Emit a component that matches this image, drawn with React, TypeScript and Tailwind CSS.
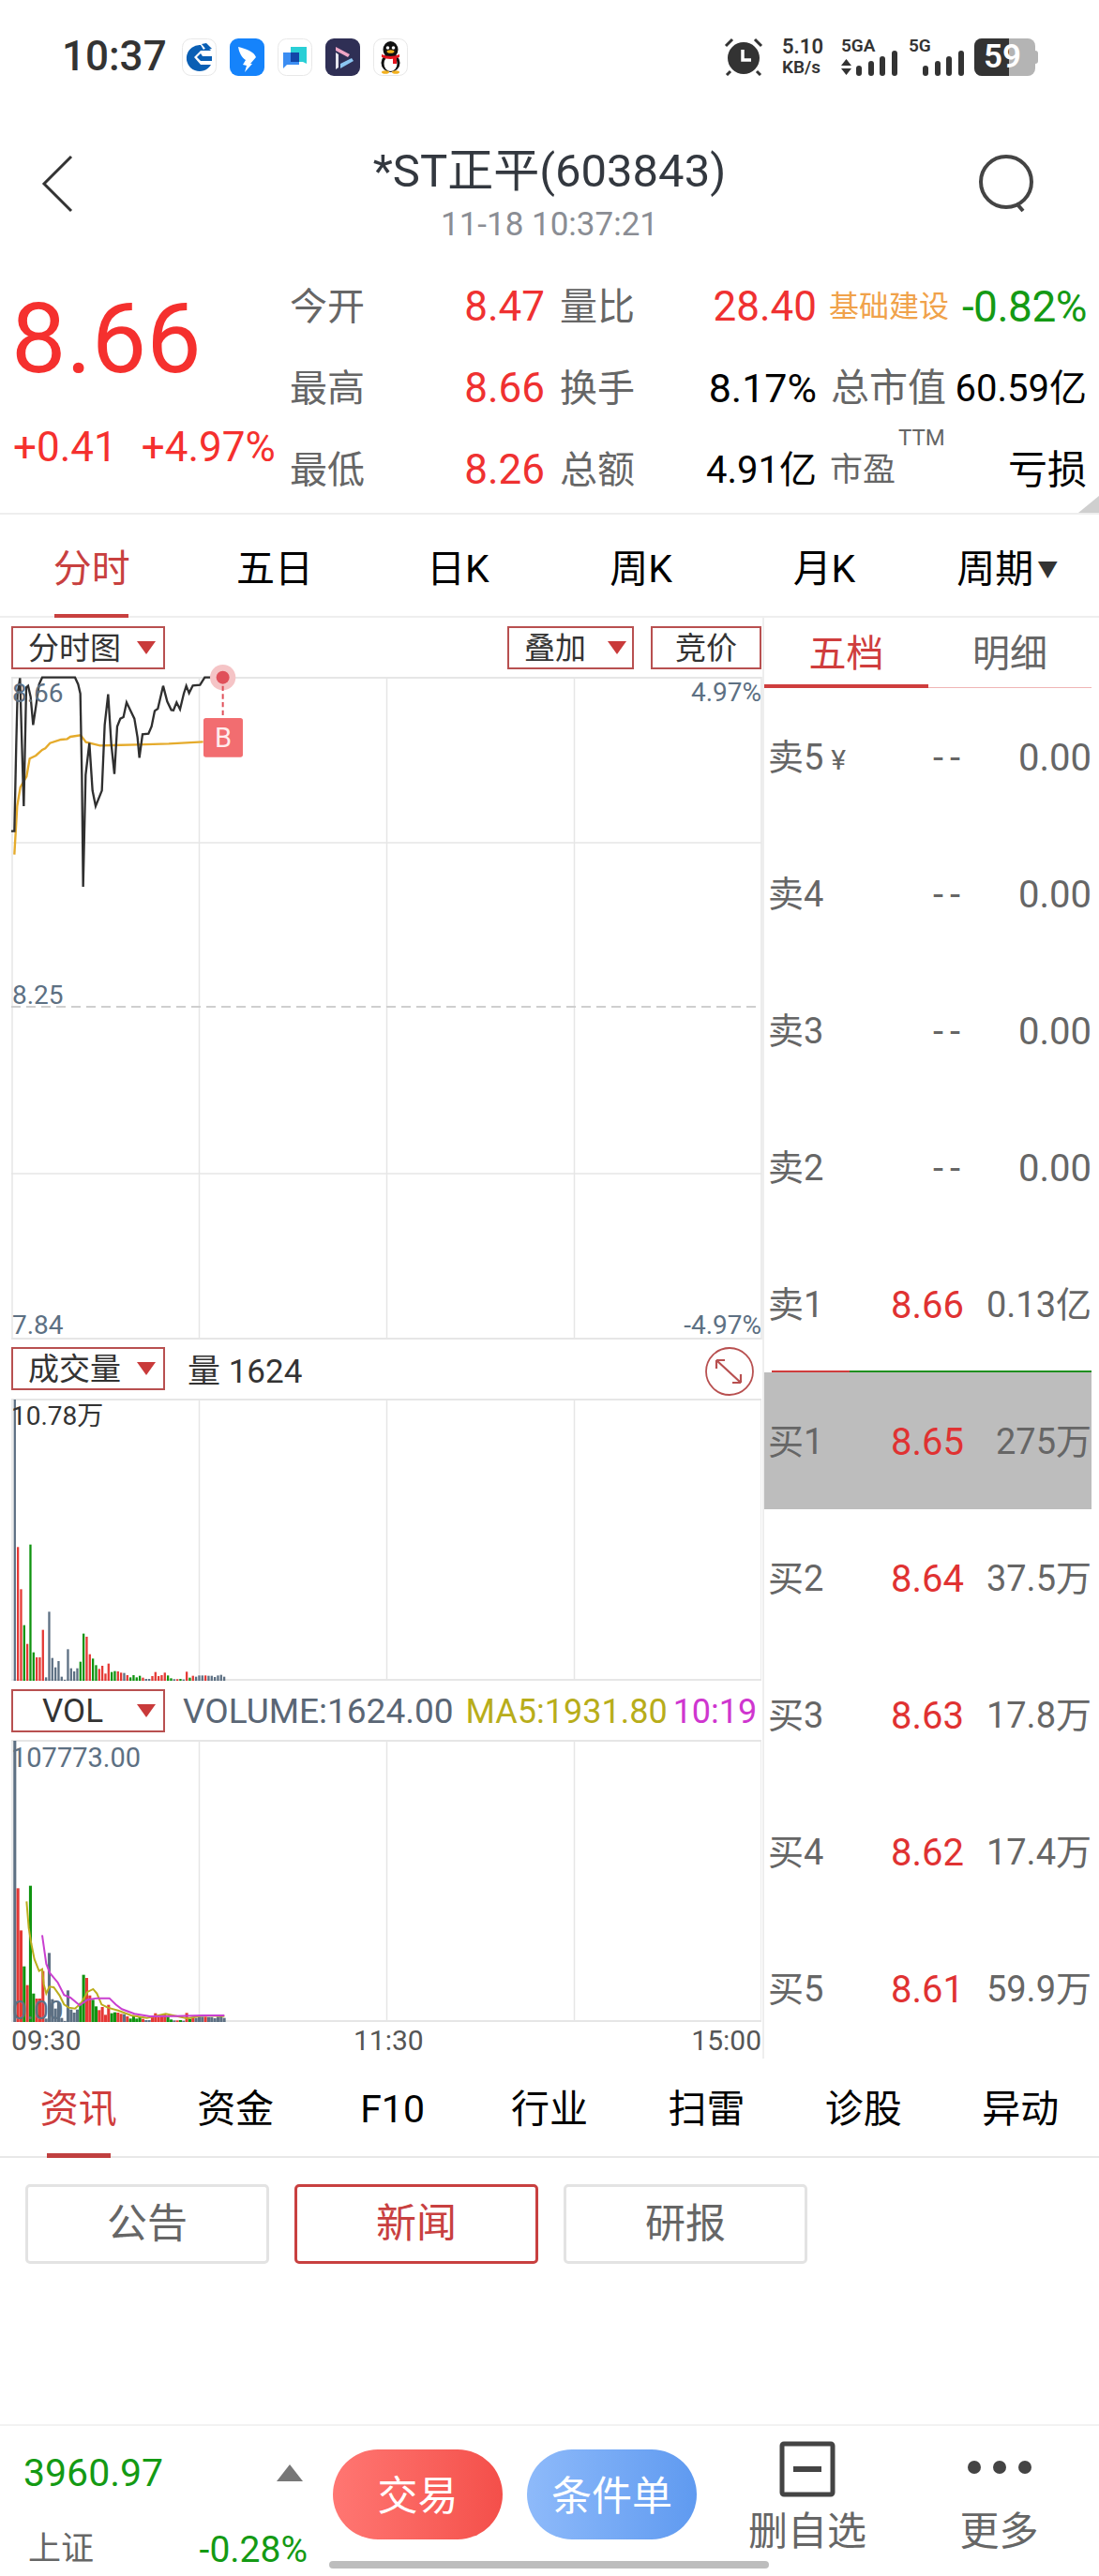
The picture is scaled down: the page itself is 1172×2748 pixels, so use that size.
import React from 'react';

const FONT = 'font-[Roboto,"Noto_Sans_CJK_SC",sans-serif]';

const price = '36,680 46,680 52,400 56,240 64,190 70,400 76,600 84,220 90,215 98,250 106,340 115,280 125,210 135,188 240,188 250,210 257,240 262,500 266,858 274,500 286,398 296,550 306,600 326,550 335,340 346,242 356,400 366,497 375,345 385,320 395,315 405,268 430,320 440,380 446,445 456,370 475,368 485,345 495,295 505,288 522,215 535,265 548,292 555,293 565,268 576,290 588,240 596,215 605,238 617,214 640,212 655,188 690,188 713,188';
const avg = '46,755 55,600 65,540 85,505 95,448 115,438 135,420 145,415 160,398 195,387 215,385 225,378 258,373 275,395 320,406 360,405 440,403 540,400 650,394';
const ma5 = '85,745 92,830 100,880 110,930 125,968 135,962 140,1010 148,1040 158,1018 172,1020 190,1045 205,1075 220,1085 240,1088 260,1070 280,1035 298,1026 310,1040 325,1075 345,1085 380,1095 420,1110 470,1118 530,1105 600,1120 650,1110 718,1112';
const ma10 = '135,853 148,945 160,975 185,1005 205,1045 225,1053 240,1065 255,1078 280,1060 310,1055 350,1055 370,1075 390,1090 430,1105 480,1113 560,1112 650,1110 718,1110';

const R = '#e53935';
const G = '#109410';
const B = '#5d7083';

// color + top of bar, read off the volume panel at 3x
const bars: [string, number][] = [
    [B, 278], [R, 750], [R, 885], [G, 1000], [R, 1060], [G, 742], [G, 1087], [R, 1103], [R, 1103], [R, 1015],
    [B, 1167], [B, 957], [B, 1105], [B, 1135], [B, 1115], [B, 1165], [B, 1175], [B, 1077], [B, 1138], [B, 1148],
    [B, 1138], [G, 1117], [G, 1027], [R, 1037], [R, 1093], [G, 1107], [G, 1128], [R, 1140], [R, 1130], [R, 1155],
    [R, 1123], [G, 1150], [G, 1147], [R, 1148], [R, 1152], [B, 1153], [R, 1160], [G, 1167], [G, 1160], [G, 1167],
    [G, 1162], [R, 1168], [B, 1172], [B, 1172], [R, 1163], [R, 1150], [R, 1163], [R, 1160], [R, 1152], [G, 1161],
    [G, 1170], [B, 1173], [R, 1173], [G, 1172], [B, 1174], [R, 1149], [G, 1168], [R, 1162], [B, 1165], [B, 1161],
    [B, 1161], [R, 1161], [B, 1162], [B, 1162], [B, 1166], [B, 1161], [B, 1159], [B, 1165],
];

const stats = [
    { label: '今开', value: '8.47', label2: '量比', value2: '28.40', color2: 'text-[44px] text-[#ef3131]' },
    { label: '最高', value: '8.66', label2: '换手', value2: '8.17%', color2: 'text-[43px] text-black' },
    { label: '最低', value: '8.26', label2: '总额', value2: '4.91亿', color2: 'text-[40px] text-black' },
];

const book = [
    { name: '卖5', price: '--', qty: '0.00', yen: true },
    { name: '卖4', price: '--', qty: '0.00' },
    { name: '卖3', price: '--', qty: '0.00' },
    { name: '卖2', price: '--', qty: '0.00' },
    { name: '卖1', price: '8.66', qty: '0.13亿' },
    { name: '买1', price: '8.65', qty: '275万', active: true },
    { name: '买2', price: '8.64', qty: '37.5万' },
    { name: '买3', price: '8.63', qty: '17.8万' },
    { name: '买4', price: '8.62', qty: '17.4万' },
    { name: '买5', price: '8.61', qty: '59.9万' },
];

const AppIcons = () => (
    <div className="ml-[19px] flex gap-[14px]">
        <svg width="37" height="40" viewBox="0 0 37 40">
            <rect x="0.5" y="0.5" width="36" height="39" rx="9" fill="#fff" stroke="#e8e8e8" />
            <path d="M20 7 A14 14 0 1 0 31 28 L20 28 L13 20 L20 13 L31 13 L27 9 L23 12 L20 7 Z" fill="#0a5fb4" />
            <path d="M20 16 L16 20 L20 24 L32 24 L32 19 L22 19 Z" fill="#0a5fb4" />
            <path d="M21 6 L26 5 L32 11 L26 12 Z" fill="#0a5fb4" />
        </svg>
        <svg width="37" height="40" viewBox="0 0 37 40">
            <rect width="37" height="40" rx="9" fill="#1583fb" />
            <path d="M9 9 C17 11 26 14 28 20 L22 27 L24 27 L16 36 L18 29 L14 28 L17 23 C13 21 10 15 9 9 Z" fill="#fff" />
        </svg>
        <svg width="37" height="40" viewBox="0 0 37 40">
            <rect x="0.5" y="0.5" width="36" height="39" rx="9" fill="#fff" stroke="#e8e8e8" />
            <path d="M14 9 H31 V27 L27 25 H14 Z" fill="#29cfd6" />
            <path d="M6 15 H23 V28 H10 L6 32 Z" fill="#3b8df2" />
            <rect x="14" y="15" width="9" height="10" fill="#1246a8" />
        </svg>
        <svg width="37" height="40" viewBox="0 0 37 40">
            <rect width="37" height="40" rx="9" fill="#2f2f55" />
            <path d="M11 9 L26 17 L24 20 L11 13 Z" fill="#f0a6c6" />
            <path d="M11 15 L14 17 L14 31 L11 33 Z" fill="#e6e6ee" />
            <path d="M16 27 L28 21 L30 24 L16 32 Z" fill="#8cc6f2" />
        </svg>
        <svg width="37" height="40" viewBox="0 0 37 40">
            <rect x="0.5" y="0.5" width="36" height="39" rx="9" fill="#fff" stroke="#e8e8e8" />
            <ellipse cx="18.5" cy="12" rx="8" ry="9" fill="#111" />
            <ellipse cx="18.5" cy="26" rx="10" ry="10" fill="#111" />
            <ellipse cx="18.5" cy="27" rx="7" ry="8" fill="#fff" />
            <circle cx="15.5" cy="10" r="1.8" fill="#fff" />
            <circle cx="21.5" cy="10" r="1.8" fill="#fff" />
            <ellipse cx="18.5" cy="14" rx="4" ry="1.8" fill="#f2b01e" />
            <path d="M9 17 Q18.5 21 28 17 L28 20 Q18.5 24 9 20 Z" fill="#e3141e" />
            <rect x="21" y="20" width="4" height="7" fill="#e3141e" />
            <ellipse cx="13" cy="36" rx="4" ry="1.8" fill="#f2b01e" />
            <ellipse cx="24" cy="36" rx="4" ry="1.8" fill="#f2b01e" />
        </svg>
    </div>
);

const Signal = () => (
    <div className="flex items-end gap-[6.7px]">
        <span className="h-[11px] w-[6px] rounded-full bg-[#333]" />
        <span className="h-[16px] w-[6px] rounded-full bg-[#333]" />
        <span className="h-[21px] w-[6px] rounded-full bg-[#333]" />
        <span className="h-[27px] w-[6px] rounded-full bg-[#333]" />
    </div>
);

const StatusBar = () => (
    <div className="flex h-[120px] items-end pb-[39px] pl-[66px] pr-[65px]">
        <span className="w-[109px] text-[44px] leading-[42px] font-medium text-[#333]">10:37</span>
        <AppIcons />
        <div className="flex-1" />
        <svg width="44" height="42" viewBox="0 0 44 42" fill="none">
            <circle cx="22" cy="23" r="17" fill="#333" />
            <path d="M21 14 V25 H30" stroke="#fff" strokeWidth="3.5" />
            <path d="M3 10 L10 3 M41 10 L34 3 M8 37 L4 41 M36 37 L40 41" stroke="#333" strokeWidth="3" />
        </svg>
        <div className="ml-[19px] w-[45px] whitespace-nowrap font-semibold text-[#333]">
            <div className="text-[22px] leading-[20px]">5.10</div>
            <div className="mt-[3px] text-[19px] leading-[18px]">KB/s</div>
        </div>
        <div className="relative ml-[18px] flex h-[41px] w-[60px] items-end justify-end">
            <span className="absolute left-0 top-0 text-[19px] leading-[18px] font-semibold text-[#333]">5GA</span>
            <svg className="absolute bottom-[1px] left-0" width="11" height="17" viewBox="0 0 11 17">
                <path d="M5.5 0 L11 7 H0 Z M0 10 H11 L5.5 17 Z" fill="#333" />
            </svg>
            <Signal />
        </div>
        <div className="relative ml-[12px] flex h-[41px] w-[59px] items-end justify-end">
            <span className="absolute left-0 top-0 text-[19px] leading-[18px] font-semibold text-[#333]">5G</span>
            <Signal />
        </div>
        <div className="ml-[11px] flex items-center">
            <div className="flex h-[40px] w-[65px] overflow-hidden rounded-[8px] bg-[#b4b4b4] text-[35px] leading-[40px] font-semibold text-white">
                <div className="w-[37px] overflow-visible whitespace-nowrap bg-[#333] pl-[10px]">59</div>
            </div>
            <span className="h-[14px] w-[3px] rounded-r-sm bg-[#b4b4b4]" />
        </div>
    </div>
);

const Header = () => (
    <div className="relative flex h-[164px] flex-col items-center pt-[33px]">
        <svg className="absolute left-[44px] top-[45px]" width="34" height="62" viewBox="0 0 34 62" fill="none">
            <path d="M32 2 L3 31 L32 60" stroke="#333" strokeWidth="3" />
        </svg>
        <svg className="absolute left-[1041px] top-[45px]" width="64" height="64" viewBox="0 0 64 64" fill="none">
            <circle cx="32" cy="29" r="27" stroke="#444" strokeWidth="4" />
            <path d="M43 52 L50 60" stroke="#444" strokeWidth="4" />
        </svg>
        <div className="text-[49px] leading-[60px] text-[#33383f]">*ST正平(603843)</div>
        <div className="mt-[5px] text-[35px] leading-[44px] text-[#8a8d94]">11-18 10:37:21</div>
    </div>
);

const Quote = () => (
    <div className="relative flex h-[265px] border-b-2 border-[#eeeeee]">
        <div className="w-[309px] shrink-0 pl-[12px] pt-[28px] text-[#f5302e]">
            <div className="text-[104px] leading-[100px]">8.66</div>
            <div className="mt-[45px] flex gap-[26px] whitespace-nowrap pl-[2px] text-[44px] leading-[40px]">
                <span>+0.41</span>
                <span>+4.97%</span>
            </div>
        </div>
        <div className="text-[40px] leading-[87px]">
            {stats.map(s => (
                <div key={s.label} className="flex h-[87px]">
                    <span className="w-[82px] text-[#666]">{s.label}</span>
                    <span className="w-[190px] text-right text-[44px] text-[#ef3131]">{s.value}</span>
                    <span className="ml-[16px] w-[82px] text-[#666]">{s.label2}</span>
                    <span className={`w-[192px] text-right ${s.color2}`}>{s.value2}</span>
                </div>
            ))}
        </div>
        <div className="flex-1 whitespace-nowrap pr-[13px] text-[40px] leading-[87px]">
            <div className="ml-[13px] flex h-[87px] justify-between">
                <span className="text-[32px] text-[#f0a24a]">基础建设</span>
                <span className="text-[46px] tracking-[-0.5px] text-[#149a14]">-0.82%</span>
            </div>
            <div className="ml-[15px] flex h-[87px] justify-between">
                <span className="text-[41px] text-[#666]">总市值</span>
                <span className="text-[40px] text-black">60.59亿</span>
            </div>
            <div className="relative ml-[14px] flex h-[87px] justify-between">
                <span className="text-[35px] text-[#666]">市盈</span>
                <span className="absolute left-[73px] top-[-3px] text-[24px] leading-[24px] text-[#666]">TTM</span>
                <span className="text-[42px] text-black">亏损</span>
            </div>
        </div>
        <svg className="absolute bottom-0 right-0" width="22" height="18" viewBox="0 0 22 18">
            <path d="M22 0 V18 H0 Z" fill="#cfcfcf" />
        </svg>
    </div>
);

const Periods = () => (
    <div className="grid h-[110px] grid-cols-6 border-b-2 border-[#eeeeee] text-[41px] text-black">
        {['分时', '五日', '日K', '周K', '月K'].map((t, i) => (
            <div key={t} className={`relative flex items-center justify-center pt-[9px] ${i === 0 ? 'text-[#c8403f]' : ''}`}>
                {t}
                {i === 0 && <span className="absolute bottom-[-2px] left-[58px] h-[4px] w-[79px] bg-[#c8403f]" />}
            </div>
        ))}
        <div className="flex items-center justify-center pt-[9px]">
            周期<span className="ml-[4px] text-[22px] text-[#333]">▼</span>
        </div>
    </div>
);

const Caret = () => (
    <svg width="20" height="14" viewBox="0 0 20 14">
        <path d="M0 0 H20 L10 14 Z" fill="#c93a3a" />
    </svg>
);

const Select = ({ label, className = 'w-[164px] pl-[16px] pr-[8px]', caret = true, text = 'text-[33px]' }: { label: string; className?: string; caret?: boolean; text?: string }) => (
    <div className={`flex h-[46px] shrink-0 items-center justify-between border-2 border-[#b85050] ${text} text-[#333] ${className}`}>
        <span className={`pt-[2px] ${caret ? '' : 'flex-1 text-center'}`}>{label}</span>
        {caret && <Caret />}
    </div>
);

// shared grid of a panel: verticals every 200px
const Grid = ({ h, rows }: { h: number; rows: number[] }) => (
    <>
        <path d={`M1 0 V${h} M200.5 0 V${h} M400.5 0 V${h} M600.5 0 V${h} M800 0 V${h}`} stroke="#e6e6e6" strokeWidth="1.5" />
        <path d={`M0 1 H800 M0 ${h - 1} H800`} stroke="#e6e6e6" strokeWidth="2" />
        {rows.map(y => <path key={y} d={`M0 ${y} H800`} stroke="#e6e6e6" strokeWidth="1.5" />)}
    </>
);

const PriceChart = () => (
    <div className="relative h-[707px] w-[800px] text-[28px] leading-[32px] text-[#5d7083]">
        <svg className="absolute inset-0 overflow-visible" width="800" height="707" viewBox="0 0 800 707" fill="none">
            <Grid h={707} rows={[177, 530]} />
            <path d="M0 352 H800" stroke="#cfcfcf" strokeWidth="2" strokeDasharray="10 6" />
            <g transform="translate(-12 -62) scale(0.3333)">
                <polyline points={avg} stroke="#e5ab2c" strokeWidth="7" />
                <polyline points={price} stroke="#2f2f2f" strokeWidth="7" />
                <circle cx="713" cy="188" r="41" fill="#f5c4c6" />
                <circle cx="713" cy="188" r="21" fill="#e0505a" />
                <path d="M713 215 V318" stroke="#e0505a" strokeWidth="6" strokeDasharray="16 10" />
                <rect x="651" y="318" width="126" height="125" rx="8" fill="#f26d70" />
            </g>
        </svg>
        <span className="absolute left-[1px] top-[2px]">8.66</span>
        <span className="absolute right-0 top-[1px]">4.97%</span>
        <span className="absolute left-[1px] top-[324px]">8.25</span>
        <span className="absolute bottom-[-1px] left-[1px]">7.84</span>
        <span className="absolute bottom-[-1px] right-0">-4.97%</span>
        <span className="absolute left-[217px] top-[44px] text-[29px] leading-[42px] text-[#ffecec]">B</span>
    </div>
);

const VolumeBars = ({ width }: { width: number }) => (
    <>
        {bars.map(([color, top], i) => {
            const h = (1178 - top) / 3;
            const x = 3 + i * 3.333 - width / 2 + 0.8;
            return <rect key={i} x={x} y={301 - h} width={width} height={h} fill={color} />;
        })}
    </>
);

const Panel = ({ children }: { children: React.ReactNode }) => (
    <svg className="absolute inset-0" width="800" height="301" viewBox="0 0 800 301" fill="none">
        <Grid h={301} rows={[]} />
        {children}
    </svg>
);

const LeftColumn = () => (
    <div className="w-[813px] shrink-0 pl-[12px]">
        <div className="flex h-[63px] w-[800px] items-start pt-[9px]">
            <Select label="分时图" />
            <div className="flex-1" />
            <Select label="叠加" className="w-[135px] pl-[16px] pr-[6px]" />
            <Select label="竞价" caret={false} className="ml-[18px] w-[118px]" />
        </div>
        <PriceChart />
        <div className="flex h-[63px] w-[800px] items-start pt-[8px]">
            <Select label="成交量" />
            <span className="ml-[24px] mt-[7px] text-[35px] leading-[40px] text-[#333]">量 1624</span>
            <div className="flex-1" />
            <svg className="mr-[7px] mt-[-1px]" width="54" height="54" viewBox="0 0 54 54" fill="none" stroke="#b85050" strokeWidth="1.8">
                <circle cx="27" cy="27" r="25" />
                <path d="M13 15 L39 39 M13 15 H22 M13 15 V24 M39 39 H30 M39 39 V30" strokeWidth="2.2" />
            </svg>
        </div>
        <div className="relative h-[301px] w-[800px] text-[28px] leading-[32px] text-[#333]">
            <Panel>
                <VolumeBars width={2.3} />
            </Panel>
            <span className="absolute left-0 top-[3px]">10.78万</span>
        </div>
        <div className="flex h-[63px] w-[800px] items-start whitespace-nowrap pt-[9px] text-[36px] leading-[42px]">
            <Select label="VOL" text="text-[35px]" className="w-[164px] pl-[31px] pr-[8px]" />
            <span className="ml-[19px] mt-[3px] text-[37px] text-[#5a6675]">VOLUME:1624.00</span>
            <span className="ml-[13px] mt-[3px] text-[#b8ad1a]">MA5:1931.80</span>
            <span className="ml-[6px] mt-[3px] text-[#cf36cf]">10:19</span>
        </div>
        <div className="relative h-[301px] w-[800px] text-[29px] leading-[32px] text-[#5d7083]">
            <Panel>
                <VolumeBars width={3.1} />
                <g transform="translate(-12 -76) scale(0.3333)" strokeWidth="6">
                    <polyline points={ma5} stroke="#bcae1e" />
                    <polyline points={ma10} stroke="#c93fd0" />
                </g>
            </Panel>
            <span className="absolute left-0 top-[3px]">107773.00</span>
            <span className="absolute bottom-[-4px] left-[1px] text-[28px]">0.00</span>
        </div>
        <div className="relative flex h-[39px] w-[800px] items-center justify-between text-[30px] text-[#555]">
            <span>09:30</span>
            <span className="absolute left-[365px]">11:30</span>
            <span>15:00</span>
        </div>
    </div>
);

const OrderBook = () => (
    <div className="flex-1 border-l-2 border-[#eeeeee]">
        <div className="flex h-[75px] text-[40px]">
            <div className="flex w-[175px] items-center justify-center border-b-4 border-[#cf3d3d] pt-[6px] text-[#cf3d3d]">五档</div>
            <div className="mr-[8px] flex flex-1 items-center justify-center border-b border-[#f0b5b5] pt-[4px] text-[#666]">明细</div>
        </div>
        {book.map(row => (
            <div key={row.name} className={`relative mr-[8px] flex h-[146px] items-center pl-[4px] pt-[3px] text-[#666] ${row.active ? 'bg-[#bdbdbd]' : ''}`}>
                {row.active && (
                    <div className="absolute left-[8px] right-0 top-[-2px] flex h-[2px]">
                        <span className="w-[83px] bg-[#cf3d3d]" />
                        <span className="flex-1 bg-[#1f8f1f]" />
                    </div>
                )}
                <span className="flex-1 whitespace-nowrap text-[38px]">{row.name}{row.yen && <span className="ml-[8px] text-[30px]">¥</span>}</span>
                {row.price === '--'
                    ? <span className="mr-[-3px] text-[40px] tracking-[7px]">--</span>
                    : <span className="text-[40px] text-[#e03232]">{row.price}</span>}
                <span className={`w-[136px] text-right ${row.qty === '0.00' ? 'text-[40px]' : 'text-[38px]'}`}>{row.qty}</span>
            </div>
        ))}
    </div>
);

const InfoTabs = () => (
    <div className="grid h-[106px] grid-cols-7 border-b-2 border-[#e8e8e8] text-[41px] text-black">
        {['资讯', '资金', 'F10', '行业', '扫雷', '诊股', '异动'].map((t, i) => (
            <div key={t} className={`relative flex items-center justify-center pt-[5px] ${i === 0 ? 'text-[#cf3d3d]' : ''}`}>
                {t}
                {i === 0 && <span className="absolute bottom-[-2px] left-[50px] h-[5px] w-[68px] bg-[#c03f3f]" />}
            </div>
        ))}
    </div>
);

const Filters = () => (
    <div className="flex flex-1 items-start gap-[27px] pl-[27px] pt-[28px] text-[43px]">
        <div className="flex h-[85px] w-[260px] items-center justify-center rounded-[5px] border-[3px] border-[#e3e3e3] text-[#666]">公告</div>
        <div className="flex h-[85px] w-[260px] items-center justify-center rounded-[5px] border-[3px] border-[#c84040] text-[#c84040]">新闻</div>
        <div className="flex h-[85px] w-[260px] items-center justify-center rounded-[5px] border-[3px] border-[#e3e3e3] text-[#666]">研报</div>
    </div>
);

const BottomBar = () => (
    <div className="relative flex h-[162px] border-t-2 border-[#f2f2f2]">
        <div className="w-[355px] shrink-0 pl-[25px] pt-[28px]">
            <div className="flex items-center justify-between pr-[32px]">
                <span className="text-[41px] leading-[44px] text-[#149a14]">3960.97</span>
                <svg width="28" height="18" viewBox="0 0 28 18"><path d="M14 0 L28 18 H0 Z" fill="#777" /></svg>
            </div>
            <div className="mt-[38px] flex items-center justify-between pl-[5px] pr-[27px]">
                <span className="text-[35px] leading-[44px] text-[#666]">上证</span>
                <span className="text-[39px] leading-[44px] text-[#149a14]">-0.28%</span>
            </div>
        </div>
        <div className="mt-[25px] flex h-[96px] w-[181px] items-center justify-center rounded-[48px] bg-linear-to-r from-[#ff7672] to-[#f44f4a] pt-[4px] text-[43px] text-white">交易</div>
        <div className="ml-[26px] mt-[25px] flex h-[96px] w-[181px] items-center justify-center rounded-[48px] bg-linear-to-r from-[#8ebafa] to-[#5f9af0] pt-[4px] text-[43px] text-white">条件单</div>
        <div className="ml-[20px] flex w-[196px] flex-col items-center pt-[16px]">
            <svg width="60" height="60" viewBox="0 0 60 60" fill="none">
                <rect x="3" y="3" width="54" height="54" rx="2" stroke="#444" strokeWidth="5" />
                <path d="M15 30 H45" stroke="#444" strokeWidth="6" />
            </svg>
            <span className="mt-[15px] text-[42px] leading-[44px] text-[#666]">删自选</span>
        </div>
        <div className="flex flex-1 flex-col items-center pt-[16px]">
            <div className="flex h-[60px] items-start gap-[13px] pt-[21px]">
                <span className="h-[14px] w-[14px] rounded-full bg-[#444]" />
                <span className="h-[14px] w-[14px] rounded-full bg-[#444]" />
                <span className="h-[14px] w-[14px] rounded-full bg-[#444]" />
            </div>
            <span className="mt-[15px] text-[42px] leading-[44px] text-[#666]">更多</span>
        </div>
        <div className="absolute bottom-[8px] left-[351px] h-[8px] w-[469px] rounded-full bg-[#bdbdbd]" />
    </div>
);

const App: React.FC = () => {
    return (
        <div className={`flex h-[2748px] w-[1172px] flex-col overflow-hidden bg-white ${FONT}`}>
            <StatusBar />
            <Header />
            <Quote />
            <Periods />
            <div className="flex h-[1537px]">
                <LeftColumn />
                <OrderBook />
            </div>
            <InfoTabs />
            <Filters />
            <BottomBar />
        </div>
    );
};

export default App;
